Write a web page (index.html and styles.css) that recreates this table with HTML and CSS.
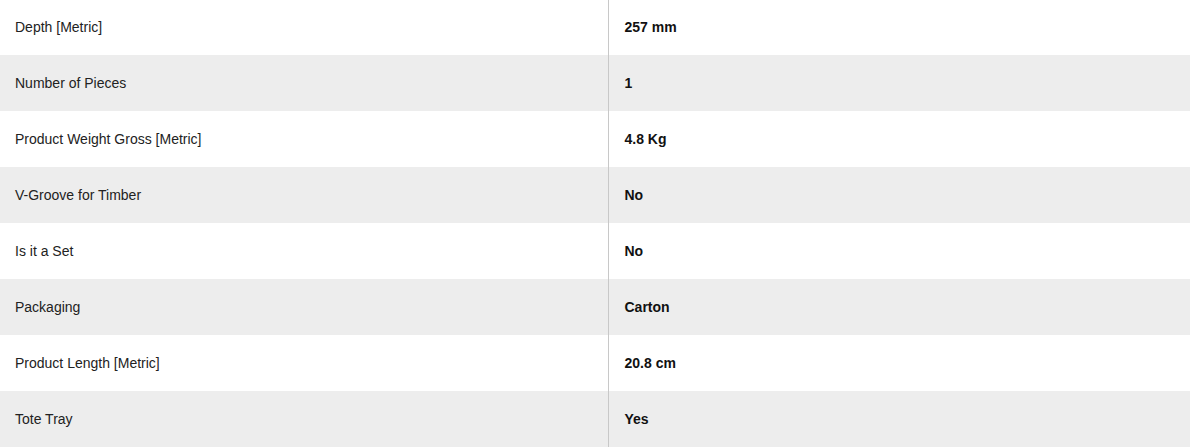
FILE: index.html
```html
<!DOCTYPE html>
<html>
<head>
<meta charset="utf-8">
<link rel="stylesheet" href="styles.css">
</head>
<body>
<table class="specs">
  <tbody>
    <tr><td class="label">Depth [Metric]</td><td class="value">257 mm</td></tr>
    <tr><td class="label">Number of Pieces</td><td class="value">1</td></tr>
    <tr><td class="label">Product Weight Gross [Metric]</td><td class="value">4.8 Kg</td></tr>
    <tr><td class="label">V-Groove for Timber</td><td class="value">No</td></tr>
    <tr><td class="label">Is it a Set</td><td class="value">No</td></tr>
    <tr><td class="label">Packaging</td><td class="value">Carton</td></tr>
    <tr><td class="label">Product Length [Metric]</td><td class="value">20.8 cm</td></tr>
    <tr><td class="label">Tote Tray</td><td class="value">Yes</td></tr>
  </tbody>
</table>
</body>
</html>
```
FILE: styles.css
```css
html, body {
  margin: 0;
  padding: 0;
  background: #fff;
}
body {
  font-family: "Liberation Sans", Arial, sans-serif;
  font-size: 14px;
  color: #222;
  overflow: hidden;
}
.specs {
  width: 1190px;
  border-collapse: collapse;
  margin-top: -1px;
  table-layout: fixed;
}
.specs tr {
  height: 56px;
}
.specs tr:nth-child(even) {
  background: #ededed;
}
.specs td {
  padding: 0;
  vertical-align: middle;
}
.specs .label {
  width: 608px;
  padding-left: 15px;
  box-sizing: border-box;
  border-right: 1px solid #c8c8c8;
}
.specs .value {
  padding-left: 16px;
  font-weight: bold;
  color: #111;
}
```
